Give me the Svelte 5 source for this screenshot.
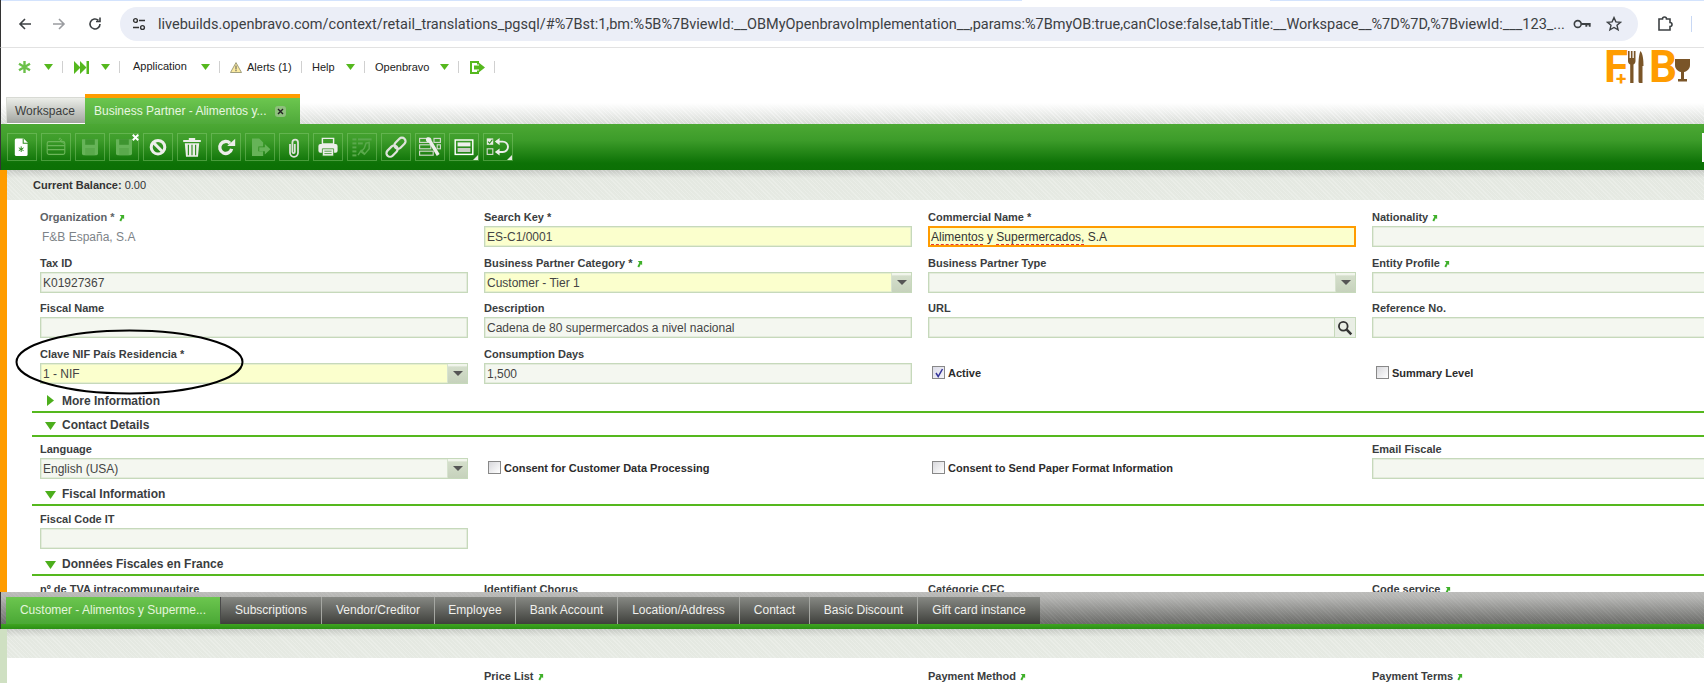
<script>
  const url = "livebuilds.openbravo.com/context/retail_translations_pgsql/#%7Bst:1,bm:%5B%7BviewId:__OBMyOpenbravoImplementation__,params:%7BmyOB:true,canClose:false,tabTitle:__Workspace__%7D%7D,%7BviewId:___123_...";
  const subtabs = [
    ["Subscriptions", 101], ["Vendor/Creditor", 113], ["Employee", 81], ["Bank Account", 102],
    ["Location/Address", 122], ["Contact", 70], ["Basic Discount", 108], ["Gift card instance", 122]
  ];
  const icons = ["new","gridv","save","saveclose","undo","trash","refresh","export","clip","print","audit","link","tools","layout","check"];
</script>

{#snippet jump()}
  <svg class="jump" viewBox="0 0 8 9" width="7" height="8"><path d="M2 1h5v5L5.600 4.600 3.600 8.400 1.600 7.400 3.800 3z" fill="#3fb02a"/></svg>
{/snippet}

{#snippet caret()}
  <svg class="caret" viewBox="0 0 9 6" width="9" height="6"><path d="M0 0h9L4.500 6z" fill="#55b81e"/></svg>
{/snippet}

{#snippet arrow()}
  <span class="sel-btn"><i></i></span>
{/snippet}

{#snippet section(title, open, cls)}
  <div class="section {cls}">
    <svg viewBox="0 0 11 11" width="11" height="11">
      {#if open}<path d="M0 2h11L5.500 10z" fill="#4cae1c"/>{:else}<path d="M2 0l7 5.500L2 11z" fill="#4cae1c"/>{/if}
    </svg>
    <span>{title}</span>
  </div>
{/snippet}

<div class="page">
  <header class="chrome">
    <div class="tabstrip"></div>
    <div class="chrome-row">
      <svg class="c-ic" viewBox="0 0 16 16" width="16" height="16"><path d="M14 8H3M8 3L3 8l5 5" fill="none" stroke="#3c4043" stroke-width="1.600"/></svg>
      <svg class="c-ic fwd" viewBox="0 0 16 16" width="16" height="16"><path d="M2 8h11M8 3l5 5-5 5" fill="none" stroke="#9a9ca0" stroke-width="1.600"/></svg>
      <svg class="c-ic rel" viewBox="0 0 16 16" width="16" height="16"><path d="M13 8a5 5 0 1 1-1.600-3.700M13 1.500v4H9" fill="none" stroke="#3c4043" stroke-width="1.600"/></svg>
      <div class="omni">
        <svg class="tune" viewBox="0 0 16 16" width="16" height="16"><circle cx="4.500" cy="4.500" r="1.900" fill="none" stroke="#333" stroke-width="1.400"/><path d="M8 4.500h6M2 11.500h6" stroke="#333" stroke-width="1.500"/><circle cx="11.500" cy="11.500" r="1.900" fill="none" stroke="#333" stroke-width="1.400"/></svg>
        <span class="url">{url}</span>
        <svg class="key" viewBox="0 0 20 12" width="19" height="12"><circle cx="5" cy="6" r="3.600" fill="none" stroke="#3c4043" stroke-width="1.700"/><path d="M8.600 5h10v4h-2V7.200h-1.600V9h-2V7H8.600z" fill="#3c4043"/></svg>
        <svg class="star" viewBox="0 0 16 16" width="16" height="16"><path d="M8 1.600l1.900 4.300 4.600.4-3.500 3 1.100 4.600L8 11.500l-4.100 2.400L5 9.300l-3.500-3 4.600-.4z" fill="none" stroke="#3c4043" stroke-width="1.400"/></svg>
      </div>
      <svg class="ext" viewBox="0 0 18 18" width="18" height="18"><path d="M3 4h3.500a2 2 0 0 1 4 0H14v3.500a2 2 0 0 1 0 4V15H3z" fill="none" stroke="#3c4043" stroke-width="1.600"/></svg>
      <span class="c-sep"></span>
    </div>
  </header>

  <nav class="nav">
    <svg class="n-aster" viewBox="0 0 13 12" width="13" height="12"><g stroke="#6cc04a" stroke-width="2.400"><path d="M6.500 0v12M1 2.800l11 6.400M12 2.800L1 9.200"/></g></svg>
    {@render caret()}
    <i class="sep"></i>
    <svg class="n-ff" viewBox="0 0 15 13" width="15" height="13"><path d="M0 0l6.500 6.500L0 13zM6 0l6.500 6.500L6 13z" fill="#55b81e"/><path d="M12.500 0H15v13h-2.500z" fill="#55b81e"/></svg>
    {@render caret()}
    <i class="sep"></i>
    <span class="n-t n-app">Application</span>
    {@render caret()}
    <i class="sep"></i>
    <svg class="n-warn" viewBox="0 0 12 11" width="12" height="11"><path d="M6 .6L11.500 10.500H.5z" fill="#fbeaa0" stroke="#8a8a6a" stroke-width=".8"/><path d="M5.500 3.500h1v4h-1zM5.500 8h1v1.300h-1z" fill="#555"/></svg>
    <span class="n-t n-alert">Alerts (1)</span>
    <i class="sep s4"></i>
    <span class="n-t n-help">Help</span>
    {@render caret()}
    <i class="sep"></i>
    <span class="n-t n-ob">Openbravo</span>
    {@render caret()}
    <i class="sep"></i>
    <svg class="n-exit" viewBox="0 0 15 13" width="15" height="13"><path d="M0 0h9v3.500H7V2H2v9h5V9.500h2V13H0z" fill="#55b81e"/><path d="M4 4.500h5V1.800L15 6.500l-6 4.700V8.500H4z" fill="#55b81e"/></svg>
    <i class="sep"></i>
    <div class="logo">
      <span class="l-f">F</span><span class="l-p">+</span>
      <svg class="cutlery" viewBox="0 0 18 32" width="18" height="32"><path d="M0 0h1.600v7h1.300V0h1.600v7h1.300V0h1.700v10c0 2-1 3-2 3.500V32H2.200V13.500C1 13 0 12 0 10z" fill="#7a5528"/><path d="M12.500 0c2.500 3 3 9 3 15h-1V32h-2.500a1.500 1.500 0 0 1-1.500-1.500V15c0-6 .5-12 2-15z" fill="#7a5528"/></svg>
      <span class="l-b">B</span>
      <svg class="glass" viewBox="0 0 15 32" width="15" height="32"><path d="M0 8h15v6c0 4-3 6.500-6 7v7h3v2.500H3V28h3v-7c-3-.5-6-3-6-7z" fill="#7a5528"/></svg>
    </div>
  </nav>

  <div class="tabs">
    <div class="tab t-ws">Workspace</div>
    <div class="tab t-act">
      <span>Business Partner - Alimentos y...</span>
      <b class="close"><svg viewBox="0 0 7 7" width="7" height="7"><path d="M1 1l5 5M6 1L1 6" stroke="#222" stroke-width="1.400"/></svg></b>
    </div>
  </div>

  <div class="toolbar">
    {#each icons as ic}
      <div class="tb-btn {ic}">
        <svg viewBox="0 0 30 28" width="24" height="22.400">
          {#if ic === "new"}
            <path d="M8 3h9l5 5v15a2 2 0 0 1-2 2H8a2 2 0 0 1-2-2V5a2 2 0 0 1 2-2z" fill="#fff"/><path d="M16.500 3v6h6" fill="none" stroke="#2f8f1e" stroke-width="1.300"/><path d="M14 13v7M11 14.800l6 3.500M17 14.800l-6 3.500" stroke="#2a8a1a" stroke-width="1.200"/>
          {:else if ic === "gridv"}
            <g fill="none" stroke="#6cb65a" stroke-width="1.400"><rect x="4" y="7" width="22" height="16" rx="2"/><path d="M4 12h22M4 17h22"/></g><path d="M19 3l6 6" stroke="#6cb65a" stroke-width="3" stroke-dasharray="1.500 1"/>
          {:else if ic === "save" || ic === "saveclose"}
            <path d="M5 4h20v18a2 2 0 0 1-2 2H7a2 2 0 0 1-2-2z" fill="#66b358"/><path d="M9 4h12v7H9z" fill="#3e9430"/><path d="M9 15h12v9H9z" fill="#5aa94c"/>
          {:else if ic === "undo"}
            <circle cx="15" cy="14" r="8.500" fill="none" stroke="#eceeea" stroke-width="3.800"/><path d="M9 8l12 12" stroke="#eceeea" stroke-width="3.800"/>
          {:else if ic === "trash"}
            <path d="M4 5h22v2.500H4zM11 2.500h8V5h-8z" fill="#eceeea"/><path d="M6 9h18l-1.500 17h-15z" fill="#eceeea"/><path d="M10.500 11v13M15 11v13M19.500 11v13" stroke="#358f25" stroke-width="1.500"/>
          {:else if ic === "refresh"}
            <path d="M22 16a7.500 7.500 0 1 1-2-7" fill="none" stroke="#eceeea" stroke-width="4.200"/><path d="M16.500 12.500h10V3.500z" fill="#eceeea"/>
          {:else if ic === "export"}
            <path d="M5 3h9l5 5v5h-6v6h6v6H5z" fill="#66b358"/><path d="M14 14h7v-4l7 6.500-7 6.500v-4h-7z" fill="#66b358"/>
          {:else if ic === "clip"}
            <path d="M10 9v11a5 5 0 0 0 10 0V7a3.500 3.500 0 0 0-7 0v12a1.500 1.500 0 0 0 3 0V9" fill="none" stroke="#dfe3dc" stroke-width="2.200" transform="translate(0 1)"/>
          {:else if ic === "print"}
            <path d="M8 3h14v7H8z" fill="none" stroke="#eceeea" stroke-width="1.800"/><rect x="3" y="10" width="24" height="11" rx="2.500" fill="#eceeea"/><path d="M8 16h14v9H8z" fill="#eceeea" stroke="#358f25"/><path d="M10.500 19h9M10.500 22h9" stroke="#358f25"/>
          {:else if ic === "audit"}
            <g fill="#5aa94c"><rect x="3" y="3" width="5" height="2.500"/><rect x="10" y="3" width="17" height="2.500"/><rect x="3" y="8" width="5" height="2.500"/><rect x="3" y="13" width="5" height="2.500"/><rect x="3" y="18" width="5" height="2.500"/><rect x="3" y="23" width="5" height="2.500"/><rect x="10" y="8" width="6" height="2.500"/></g><path d="M24 8v8l-6 7-4-3 4-5 2-6z M10 24l4-6 4 4" fill="none" stroke="#5aa94c" stroke-width="1.800"/>
          {:else if ic === "link"}
            <g fill="none" stroke="#dfe3dc" stroke-width="2.800" transform="rotate(-45 15 14)"><rect x="0" y="9.500" width="16" height="9" rx="4.500"/><rect x="14" y="9.500" width="16" height="9" rx="4.500"/></g>
          {:else if ic === "tools"}
            <g fill="none" stroke="#d5dbd0" stroke-width="1.400"><rect x="2" y="3" width="11" height="5"/><rect x="20" y="3" width="8" height="5"/><rect x="2" y="11" width="14" height="5"/><rect x="2" y="19" width="17" height="5"/><rect x="24" y="11" width="4" height="5"/></g><path d="M11 2c3-1.500 6 0 6 3.500l10 17-3.500 2.500-10-17c-3 0-5-3-2.500-6z" fill="#eceeea"/>
          {:else if ic === "layout"}
            <rect x="4" y="5" width="22" height="18" fill="none" stroke="#fff" stroke-width="1.800"/><path d="M7 8h16v5H7z" fill="#eef0ec"/><path d="M7 15h16v5H7z" fill="#c9cfc5"/>
          {:else if ic === "check"}
            <rect x="1" y="3" width="8" height="8" fill="#e8ebe4"/><path d="M2.500 7l2 2 3.500-4.500" stroke="#2a8a1a" fill="none" stroke-width="1.300"/><rect x="1.500" y="16" width="7" height="7" fill="none" stroke="#d5dbd0" stroke-width="1.400"/><path d="M13 7h8a6.500 6.500 0 0 1 0 13h-7" fill="none" stroke="#eceeea" stroke-width="2.400"/><path d="M17 2.500l-6 4.500 6 4.500zM17 15.500l-6 4.500 6 4.500z" fill="#eceeea"/>
          {/if}
        </svg>
        {#if ic === "saveclose"}<svg class="x-mark" viewBox="0 0 7 7" width="7" height="7"><path d="M.8.8l5.400 5.400M6.200.8L.8 6.200" stroke="#fff" stroke-width="2"/></svg>{/if}
      </div>
    {/each}
    <span class="edge"></span>
  </div>

  <main class="pane">
    <div class="status"><b>Current Balance:</b> 0.00</div>
    <div class="body">
      <div class="grid first">
        <div class="f"><label class="muted">Organization * {@render jump()}</label><div class="ro">F&amp;B España, S.A</div></div>
        <div class="f"><label>Search Key *</label><div class="in req">ES-C1/0001</div></div>
        <div class="f"><label>Commercial Name *</label><div class="in req focus"><span class="sp">Alimentos</span> y <span class="sp">Supermercados,</span> S.A</div></div>
        <div class="f"><label>Nationality {@render jump()}</label><div class="in"></div></div>

        <div class="f"><label>Tax ID</label><div class="in">K01927367</div></div>
        <div class="f"><label>Business Partner Category * {@render jump()}</label><div class="in req">Customer - Tier 1{@render arrow()}</div></div>
        <div class="f"><label>Business Partner Type</label><div class="in">{@render arrow()}</div></div>
        <div class="f"><label>Entity Profile {@render jump()}</label><div class="in"></div></div>

        <div class="f"><label>Fiscal Name</label><div class="in"></div></div>
        <div class="f"><label>Description</label><div class="in">Cadena de 80 supermercados a nivel nacional</div></div>
        <div class="f"><label>URL</label><div class="in"><span class="search"><svg viewBox="0 0 14 14" width="16" height="16"><circle cx="5.500" cy="5.500" r="3.800" fill="none" stroke="#333" stroke-width="1.600"/><path d="M8.500 8.500l4 4" stroke="#333" stroke-width="2.200"/></svg></span></div></div>
        <div class="f"><label>Reference No.</label><div class="in"></div></div>

        <div class="f"><label>Clave NIF País Residencia *</label><div class="in req">1 - NIF{@render arrow()}</div></div>
        <div class="f"><label>Consumption Days</label><div class="in">1,500</div></div>
        <div class="f chk"><span class="box on"><svg viewBox="0 0 10 10" width="10" height="10"><path d="M2 5l2.200 3.500L8.500 1" fill="none" stroke="#34349a" stroke-width="1.500"/></svg></span><b>Active</b></div>
        <div class="f chk"><span class="box"></span><b>Summary Level</b></div>
      </div>

      {@render section("More Information", false, "sec-more")}
      {@render section("Contact Details", true, "sec-contact")}
      <div class="grid one">
        <div class="f"><label>Language</label><div class="in">English (USA){@render arrow()}</div></div>
        <div class="f chk"><span class="box"></span><b>Consent for Customer Data Processing</b></div>
        <div class="f chk"><span class="box"></span><b>Consent to Send Paper Format Information</b></div>
        <div class="f"><label>Email Fiscale</label><div class="in"></div></div>
      </div>
      {@render section("Fiscal Information", true, "sec-fiscal")}
      <div class="grid one">
        <div class="f"><label>Fiscal Code IT</label><div class="in"></div></div>
      </div>
      {@render section("Données Fiscales en France", true, "sec-fiscal")}
      <div class="grid one">
        <div class="f"><label>nº de TVA intracommunautaire</label><div class="in"></div></div>
        <div class="f"><label>Identifiant Chorus</label><div class="in"></div></div>
        <div class="f"><label>Catégorie CFC</label><div class="in"></div></div>
        <div class="f"><label>Code service {@render jump()}</label><div class="in"></div></div>
      </div>
    </div>
    <svg class="ellipse" viewBox="0 0 229 66" width="229" height="66"><ellipse cx="114.500" cy="33" rx="113" ry="31.500" fill="none" stroke="#000" stroke-width="2"/></svg>
  </main>

  <div class="subbar">
    <div class="subtabs">
      <div class="st st-act">Customer - Alimentos y Superme...</div>
      {#each subtabs as [name, w]}
        <div class="st" style="width:{w}px">{name}</div>
      {/each}
    </div>
    <div class="greenline"></div>
  </div>

  <div class="lower">
    <div class="status2"></div>
    <div class="grid lower-grid">
      <div class="f"></div>
      <div class="f"><label>Price List {@render jump()}</label></div>
      <div class="f"><label>Payment Method {@render jump()}</label></div>
      <div class="f"><label>Payment Terms {@render jump()}</label></div>
    </div>
  </div>
</div>

<style>
  :global(body) { margin: 0; background: #fff; }
  .page {
    width: 1704px; height: 683px; overflow: hidden; position: relative;
    display: flex; flex-direction: column;
    font-family: "Liberation Sans", Arial, sans-serif; color: #333;
    background: #fff;
  }
  .chrome { height: 48px; flex: none; border-bottom: 1px solid #e2e2e2; box-sizing: border-box; border-left: 1px solid #333; }
  .tabstrip { height: 1px; background: linear-gradient(90deg, #d3e3fd 1021px, #fff 1021px, #fff 1269px, #d3e3fd 1269px); }
  .chrome-row { display: flex; align-items: center; height: 34px; margin-top: 6px; padding-left: 16px; }
  .c-ic { flex: none; }
  .fwd { margin-left: 18px; }
  .rel { margin-left: 20px; }
  .omni {
    margin-left: 17px; width: 1518px; height: 34px; border-radius: 17px; background: #ebeef7;
    display: flex; align-items: center; flex: none; box-sizing: border-box; padding-left: 11px;
  }
  .tune { flex: none; }
  .url {
    margin-left: 11px; width: 1409px; flex: none; white-space: nowrap; overflow: hidden;
    font-family: Roboto, "Noto Sans", sans-serif; font-size: 14.5px; color: #3c4043;
  }
  .key { margin-left: 6px; flex: none; }
  .star { margin-left: 14px; flex: none; }
  .ext { margin-left: 18px; flex: none; }
  .c-sep { width: 1px; height: 16px; background: #c8d8f4; margin-left: 17px; }

  .nav { height: 46px; flex: none; display: flex; align-items: center; position: relative; border-left: 1px solid #333; box-sizing: border-box; font-size: 11px; color: #222; padding-left: 17px; padding-bottom: 8px; }
  .nav > * { flex: none; }
  .n-t { line-height: 14px; }
  .caret { margin-left: 13px; }
  .sep { width: 1px; height: 12px; background: #d0d0d0; margin-left: 9px; }
  .n-ff { margin-left: 11px; }
  .n-ff + .caret { margin-left: 12px; }
  .n-app { margin-left: 13px; margin-top: -2px; width: 54px; }
  .n-app + .caret { margin-left: 14px; }
  .n-warn { margin-left: 10px; }
  .n-alert { margin-left: 5px; width: 46px; }
  .s4 { margin-left: 8px; }
  .n-help { margin-left: 10px; width: 22px; }
  .n-help + .caret { margin-left: 12px; }
  .n-ob { margin-left: 10px; width: 54px; }
  .n-ob + .caret { margin-left: 11px; }
  .n-exit { margin-left: 11px; }

  .logo { margin-left: auto; margin-right: 14px; display: flex; align-items: center; height: 33px; position: relative; width: 86px; color: #ff9c00; font-family: Roboto, sans-serif; font-weight: 700; }
  .l-f { font-size: 44px; line-height: 33px; width: 21px; }
  .l-p { position: absolute; left: 12px; top: 18px; font-size: 19px; line-height: 19px; }
  .cutlery { margin-left: 3px; }
  .l-b { font-size: 44px; line-height: 33px; margin-left: 3px; width: 25px; }
  .glass { margin-left: 1px; }

  .tabs {
    height: 30px; flex: none; display: flex; align-items: flex-end; padding-left: 5px; border-left: 1px solid #333; box-sizing: border-box;
    background:
      repeating-linear-gradient(45deg, rgba(255,255,255,.35) 0 1px, transparent 1px 3px),
      linear-gradient(#fff 30%, #d9dcd8 100%);
  }
  .tab { font-size: 12px; box-sizing: border-box; display: flex; align-items: center; }
  .t-ws { width: 79px; height: 27px; padding-left: 8px; color: #3b3d3d; background: linear-gradient(#eceee9, #a2a5a0); border: 1px solid #d8dad4; border-bottom: 1px solid #fff; border-right: none; }
  .t-act { width: 215px; height: 30px; border-top: 4px solid #ff9c00; background: linear-gradient(#6cc64f, #4fa93a); color: #e8f6e0; padding-left: 9px; }
  .close { margin-left: 8px; width: 11px; height: 11px; border-radius: 3px; background: #8fc07e; display: flex; align-items: center; justify-content: center; }

  .toolbar {
    height: 46px; flex: none; display: flex; align-items: center; gap: 4px; padding-left: 6px;
    background: linear-gradient(#4ca834 0%, #3d9c2a 35%, #0d7206 85%, #0c7005 100%);
    border-left: 1px solid #333; box-sizing: border-box;
  }
  .tb-btn { width: 30px; height: 28px; box-sizing: border-box; border: 1px solid rgba(140,205,120,.45); display: flex; align-items: center; justify-content: center; flex: none; position: relative; }
  .tb-btn svg { display: block; }
  .x-mark { position: absolute; right: -1px; top: 0; }
  .layout::after, .check::after { content: ""; position: absolute; right: 0; bottom: 0; border-style: solid; border-width: 0 0 5px 5px; border-color: transparent transparent #e6e9e2 transparent; }
  .edge { margin-left: auto; width: 2px; height: 29px; background: #fff; }

  .pane { height: 422px; flex: none; border-left: 7px solid #ff9c00; box-sizing: border-box; overflow: hidden; position: relative; }
  .status {
    height: 30px; box-sizing: border-box; padding: 8px 0 0 26px; font-size: 11px; line-height: 14px; color: #333;
    background:
      repeating-linear-gradient(45deg, rgba(255,255,255,.22) 0 1px, transparent 1px 3px),
      linear-gradient(#c6c9c4 0, #e4e8e1 8px, #e6eae3 100%);
  }
  .body { padding-top: 9px; }
  .grid { display: grid; grid-template-columns: repeat(4, 428px); column-gap: 16px; padding-left: 33px; }
  .first { grid-template-rows: 46px 45px 46px 39px; }
  .f { min-width: 0; position: relative; }
  label { display: block; height: 17px; font-size: 11px; font-weight: 700; line-height: 17px; color: #3a3d40; white-space: nowrap; }
  label.muted { color: #5d6368; }
  .jump { vertical-align: -1px; }
  .ro { height: 21px; line-height: 23px; padding-left: 2px; font-size: 12px; color: #7d8388; }
  .in {
    height: 21px; box-sizing: border-box; border: 1px solid #c6d9bb; background: #f4f7f0;
    font-size: 12px; line-height: 21px; padding-left: 2px; color: #444; position: relative; white-space: nowrap;
    box-shadow: inset 0 0 0 .5px #d3e2ca;
  }
  .req { background: #fbffcd; }
  .focus { border: 1px solid #ff9c00; box-shadow: inset 0 0 0 1px #ff9c00; color: #333; }
  .sp { text-decoration: underline dashed #e53935 1px; text-underline-offset: 3px; }
  .sel-btn {
    position: absolute; right: 0; top: 0; bottom: 0; width: 20px; box-sizing: border-box; border-left: 1px solid #d7e3cf;
    background: linear-gradient(#f1f5ec 0 10%, #d4decb 15%, #c6d2bc 100%); display: flex; align-items: center; justify-content: center;
  }
  .sel-btn i { width: 0; height: 0; border-style: solid; border-width: 5px 5px 0 5px; border-color: #555 transparent transparent transparent; }
  .search { position: absolute; right: 0; top: 0; bottom: 0; width: 20px; background: #e9eee5; border-left: 1px solid #c6d9bb; display: flex; align-items: center; justify-content: center; }
  .chk { display: flex; align-items: center; gap: 2px; font-size: 11px; color: #2c2c2c; padding-left: 4px; height: 21px; }
  .chk b { margin-left: 1px; }
  .first .chk { margin-top: 16px; }
  .one .chk { margin-top: 16px; }
  .box { width: 11px; height: 11px; border: 1px solid #888; background: linear-gradient(135deg, #d8d8dc, #fff); display: flex; align-items: center; justify-content: center; flex: none; }
  .box.on { background: linear-gradient(135deg, #dcdce8, #f4f4fa); }

  .section { display: flex; align-items: center; margin-left: 25px; border-bottom: 2px solid #55b81e; box-sizing: border-box; font-size: 12px; font-weight: 700; color: #3a3d40; padding-left: 13px; }
  .section svg { flex: none; }
  .section span { margin-left: 6px; }
  .sec-more { height: 28px; padding-top: 5px; }
  .sec-contact { height: 24px; margin-bottom: 4px; padding-top: 2px; }
  .sec-fiscal { height: 27px; margin-bottom: 5px; padding-top: 5px; }
  .one { grid-auto-rows: 38px; }

  .ellipse { position: absolute; left: 8px; top: 159px; pointer-events: none; }

  .subbar { height: 37px; flex: none; display: flex; flex-direction: column; border-left: 1px solid #333; box-sizing: border-box;
    background:
      repeating-linear-gradient(45deg, rgba(255,255,255,.06) 0 1px, transparent 1px 3px),
      linear-gradient(#bcbcba 0, #b4b4b2 15%, #5c5d5a 100%);
  }
  .subtabs { height: 27px; margin-top: 5px; display: flex; padding-left: 5px; flex: none; }
  .st { box-sizing: border-box; height: 27px; font-size: 12px; line-height: 27px; color: #f0f0ec; background: linear-gradient(#868883, #3f403c); border-right: 1px solid #a5a7a2; text-align: center; flex: none; white-space: nowrap; }
  .st:last-child { border-right: none; }
  .st-act { width: 215px; background: linear-gradient(#6cc64f, #4aa835); color: #e4f5dc; border-right: 1px solid #4a4a4a; }
  .greenline { height: 5px; background: linear-gradient(#3fa420, #2b8f15); flex: none; }

  .lower { flex: 1; border-left: 7px solid #cfe0c2; position: relative; box-shadow: -1px 0 0 0 #333; }
  .status2 {
    height: 29px;
    background:
      repeating-linear-gradient(45deg, rgba(255,255,255,.22) 0 1px, transparent 1px 3px),
      linear-gradient(#c6c9c4 0, #e4e8e1 8px, #e6eae3 100%);
  }
  .lower-grid { padding-top: 10px; }
</style>
